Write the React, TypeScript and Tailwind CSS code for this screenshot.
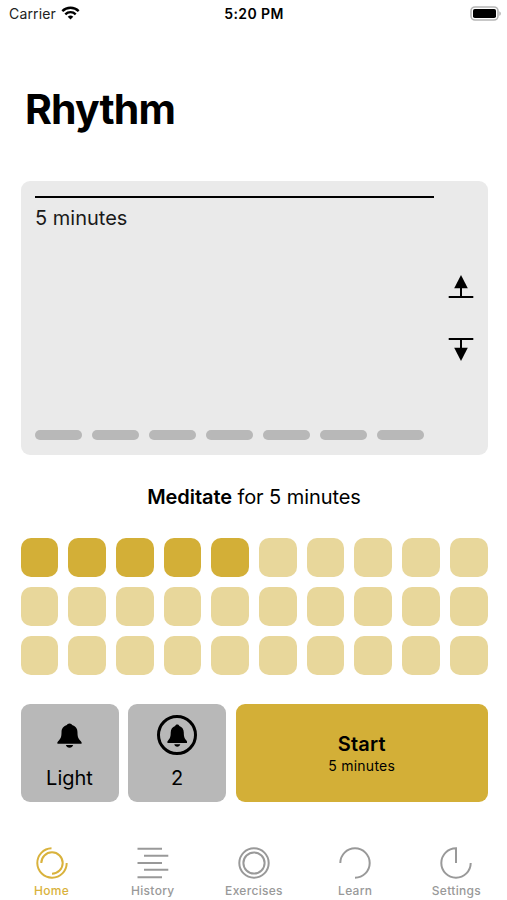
import React from "react";

const CELLS = 30;
const MINUTES = 5;

const WifiIcon = () => (
  <svg width="19" height="14" viewBox="0 0 18 14" fill="none" stroke="#000" strokeWidth="2.4">
    <path d="M0.8 5.1a11.7 11.7 0 0 1 16.4 0" />
    <path d="M3.8 8.3a7.4 7.4 0 0 1 10.4 0" />
    <path d="M9 13.6L6.2 10.8a4 4 0 0 1 5.6 0z" fill="#000" stroke="none" />
  </svg>
);

const BatteryIcon = () => (
  <svg width="32" height="16" viewBox="0 0 32 16">
    <rect x="1" y="1" width="27" height="13" rx="4" fill="#fff" stroke="#b5b5b5" strokeWidth="1.6" />
    <rect x="3" y="3" width="23" height="9" rx="1.8" fill="#000" />
    <path d="M29.3 5.2c2 .8 2 3.8 0 4.6z" fill="#b0b0b0" />
  </svg>
);

const ArrowIcon = ({ down = false }: { down?: boolean }) => (
  <svg
    width="26"
    height="26"
    viewBox="0 0 26 26"
    className={down ? "rotate-180" : ""}
  >
    <path d="M13 1L19.8 14.2H6.2z" fill="#000" />
    <path d="M13 13v10M0.7 23h24.6" stroke="#000" strokeWidth="2" />
  </svg>
);

const Bell = ({ width, height }: { width: number; height: number }) => (
  <svg width={width} height={height} viewBox="0 0 26 26" preserveAspectRatio="none">
    <path
      d="M13 .6c-1.500 0-2.400.8-2.700 1.600C7 3.100 4.700 5.800 4.700 9.700c0 5.300-1.200 6.900-3 8.700C.9 19.300.3 20 .3 20.700c0 .6.400.9 1.100.9h23.200c.7 0 1.100-.3 1.100-.9 0-.7-.6-1.400-1.400-2.300-1.800-1.800-3-3.400-3-8.700 0-3.900-2.300-6.600-5.600-7.500-.3-.8-1.200-1.600-2.700-1.600z"
      fill="#000"
    />
    <path d="M9.200 23h7.600c-.4 1.700-1.800 2.800-3.800 2.800s-3.400-1.100-3.800-2.800z" fill="#000" />
  </svg>
);

// tab glyphs share a 32px box centred on 16,16
const tabs = [
  {
    label: "Home",
    icon: (
      <>
        <path d="M15.500 1.300A14.700 14.700 0 1 0 30.700 16" />
        <path d="M5.300 16A10.700 10.700 0 1 1 16 26.700" />
      </>
    ),
  },
  {
    label: "History",
    icon: <path d="M0.500 1.800H25M7 8.800H31.300M0.500 16H25M7 22.800H31.300M0.500 30.200H25" />,
  },
  {
    label: "Exercises",
    icon: (
      <>
        <circle cx="16" cy="16" r="14.700" />
        <circle cx="16" cy="16" r="10.600" />
      </>
    ),
  },
  {
    label: "Learn",
    icon: <path d="M1.300 16A14.700 14.700 0 1 1 16 30.700" />,
  },
  {
    label: "Settings",
    icon: <path d="M16 16V1.300A14.700 14.700 0 1 0 30.700 16" />,
  },
];

const App: React.FC = () => {
  return (
    <div className="flex h-[900px] w-[507px] flex-col overflow-hidden bg-white font-[Inter,sans-serif] text-black">
      <header className="grid h-[26px] grid-cols-3 items-center pr-[5px] pl-[9px] text-[14px]">
        <div className="flex items-center gap-[5px]">
          <span className="tracking-[0.150px] text-[#222]">Carrier</span>
          <WifiIcon />
        </div>
        <span className="pr-[3px] text-center font-semibold tracking-[0.400px]">5:20 PM</span>
        <div className="flex justify-end pt-px">
          <BatteryIcon />
        </div>
      </header>

      <h1 className="mt-[58px] pl-[25px] text-[41px] leading-[50px] font-bold tracking-[-0.850px]">Rhythm</h1>

      <main className="flex flex-col pr-[19.500px] pl-[20.500px]">
        <section className="mt-[47px] flex h-[273.500px] rounded-[9px] bg-[#eaeaea] pt-[14.500px] pr-[14px] pb-[14.500px] pl-[14.500px]">
          <div className="flex w-[399px] flex-col">
            <div className="h-[2.500px] bg-black" />
            <p className="mt-[8px] text-[20px] leading-[25px] text-[#1a1a1a]">5 minutes</p>
            <div className="mt-auto flex gap-[9.700px] pr-[9.700px]">
              {Array.from({ length: 7 }, (_, i) => (
                <div key={i} className="h-[10px] flex-1 rounded-full bg-[#b8b8b8]" />
              ))}
            </div>
          </div>
          <div className="ml-auto flex flex-col items-center justify-center gap-[36px] pt-px">
            <ArrowIcon />
            <ArrowIcon down />
          </div>
        </section>

        <p className="mt-[29px] text-center text-[20px] leading-[26px] tracking-[-0.080px]">
          <span className="font-semibold">Meditate</span> for 5 minutes
        </p>

        <section className="mt-[28.500px] grid grid-cols-10 gap-x-[9.700px] gap-y-[10px]">
          {Array.from({ length: CELLS }, (_, i) => (
            <div
              key={i}
              className={`h-[39px] rounded-[10px] ${i < MINUTES ? "bg-[#d3af37]" : "bg-[#e8d79b]"}`}
            />
          ))}
        </section>

        <section className="mt-[29px] flex h-[98px] gap-[9.700px] text-[20px] leading-[26px]">
          <button className="flex w-[98px] flex-col items-center rounded-[9px] bg-[#b8b8b8]">
            <span className="flex h-[61px] items-center pt-[1px]">
              <Bell width={25} height={25} />
            </span>
            <span>Light</span>
          </button>
          <button className="flex w-[98px] flex-col items-center rounded-[9px] bg-[#b8b8b8]">
            <span className="flex h-[61px] items-center pt-[1px]">
              <span className="flex size-[40px] items-center justify-center rounded-full border-[3px] border-black">
                <Bell width={20.5} height={23} />
              </span>
            </span>
            <span>2</span>
          </button>
          <button className="flex flex-1 flex-col items-center rounded-[9px] bg-[#d3af37] pt-[28px]">
            <span className="leading-[25px] font-semibold tracking-[0.200px]">Start</span>
            <span className="text-[14px] leading-[17px] tracking-[0.250px]">5 minutes</span>
          </button>
        </section>
      </main>

      <nav className="mt-auto grid h-[53px] grid-cols-5 pl-px">
        {tabs.map((tab, i) => (
          <div
            key={tab.label}
            className={`flex flex-col items-center ${i === 0 ? "text-[#d9b23c]" : "text-[#999999]"}`}
          >
            <svg width="32" height="32" viewBox="0 0 32 32" fill="none" stroke="currentColor" strokeWidth="2">
              {tab.icon}
            </svg>
            <span className="mt-[4px] text-[12px] leading-[16px] font-medium tracking-[0.300px]">{tab.label}</span>
          </div>
        ))}
      </nav>
    </div>
  );
};

export default App;
